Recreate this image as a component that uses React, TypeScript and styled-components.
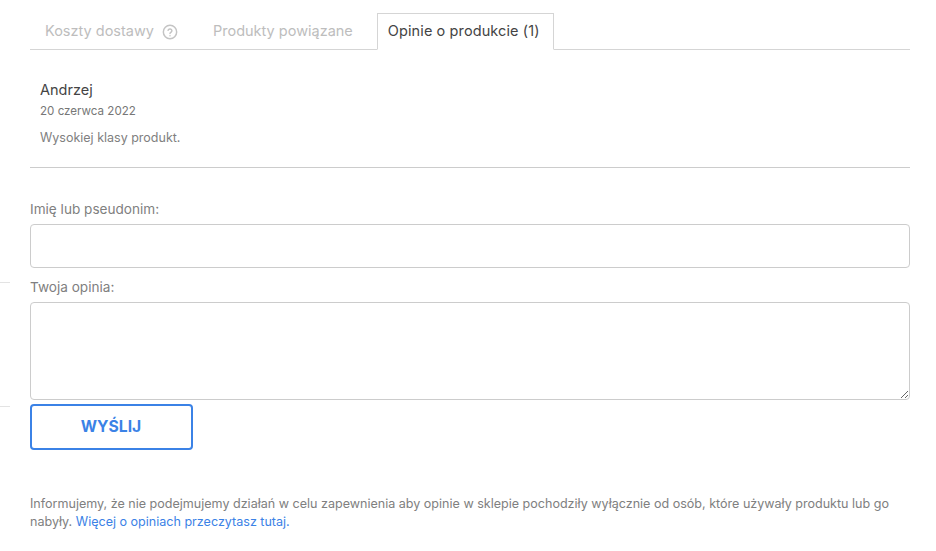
import styled, { createGlobalStyle } from "styled-components";

const GlobalStyle = createGlobalStyle`
  html, body {
    margin: 0;
    padding: 0;
    background: #fff;
  }
  body {
    font-family: "Inter", "Liberation Sans", sans-serif;
    color: #666;
  }
`;

const Page = styled.div`
  position: relative;
  width: 936px;
  height: 551px;
  overflow: hidden;
  padding: 13px 26px 0 30px;
  box-sizing: border-box;
`;

const SideLine = styled.div<{ $top: number }>`
  position: absolute;
  left: 0;
  top: ${(p) => p.$top}px;
  width: 10px;
  height: 1px;
  background: #e3e3e3;
`;

const TabBar = styled.div`
  display: flex;
  height: 37px;
  box-sizing: border-box;
  border-bottom: 1px solid #d5d5d5;
`;

const Tab = styled.div<{ $active?: boolean }>`
  display: flex;
  align-items: center;
  gap: 8px;
  height: 36px;
  box-sizing: border-box;
  padding-bottom: 1px;
  font-size: 14.5px;
  color: #bdbdbd;
  &:first-child {
    padding-left: 15px;
  }
  &:nth-child(2) {
    margin-left: 35px;
  }
  ${(p) =>
    p.$active &&
    `
    height: 37px;
    margin-left: 24px;
    padding: 0 13px 3px 10px;
    letter-spacing: 0.1px;
    color: #444;
    background: #fff;
    border: 1px solid #d5d5d5;
    border-bottom-color: #fff;
  `}
`;

const HelpIcon = styled.svg`
  width: 16px;
  height: 16px;
  color: #c4c4c4;
  margin-top: 2px;
`;

const Review = styled.div`
  padding: 30px 10px 20px;
  border-bottom: 1px solid #ccc;
  height: 118px;
  box-sizing: border-box;
`;

const Author = styled.div`
  font-size: 14.5px;
  line-height: 20px;
  color: #444;
`;

const ReviewDate = styled.div`
  font-size: 11.6px;
  line-height: 14px;
  margin-top: 4px;
  color: #777;
`;

const ReviewText = styled.div`
  font-size: 12.5px;
  line-height: 16px;
  margin-top: 12px;
  color: #808080;
`;

const Form = styled.form`
  display: flex;
  flex-direction: column;
  padding-top: 33px;
`;

const Label = styled.label`
  font-size: 13.6px;
  line-height: 16px;
  color: #808080;
  margin-bottom: 7px;
`;

const TextInput = styled.input`
  height: 44px;
  box-sizing: border-box;
  border: 1px solid #ccc;
  border-radius: 4px;
  background: #fff;
  margin-bottom: 11px;
  outline: none;
`;

const TextArea = styled.textarea`
  display: block;
  height: 98px;
  box-sizing: border-box;
  border: 1px solid #ccc;
  border-radius: 4px;
  background: #fff;
  outline: none;
  margin-bottom: 4px;
  resize: vertical;
`;

const SubmitButton = styled.button`
  width: 163px;
  height: 46px;
  box-sizing: border-box;
  border: 2px solid #3b82e6;
  border-radius: 4px;
  background: #fff;
  color: #3b82e6;
  font-family: inherit;
  font-size: 15.7px;
  font-weight: 700;
  padding: 0 1px 2px 0;
`;

const Notice = styled.p`
  margin: 45px 0 0;
  font-size: 12.56px;
  line-height: 18px;
  color: #808080;
`;

const NoticeLink = styled.a`
  color: #3b82e6;
  text-decoration: none;
`;

export default function App() {
  return (
    <>
      <GlobalStyle />
      <Page>
        <SideLine $top={282} />
        <SideLine $top={406} />
        <TabBar>
          <Tab>
            Koszty dostawy
            <HelpIcon viewBox="0 0 24 24" fill="none" stroke="currentColor" strokeWidth="2.2" strokeLinecap="round">
              <circle cx="12" cy="12" r="10" />
              <path d="M9.1 9.5a3 3 0 0 1 5.8 .8c0 2-2.9 2.2-2.9 3.9" />
              <path d="M12 17.5h.01" />
            </HelpIcon>
          </Tab>
          <Tab>Produkty powiązane</Tab>
          <Tab $active>Opinie o produkcie (1)</Tab>
        </TabBar>
        <Review>
          <Author>Andrzej</Author>
          <ReviewDate>20 czerwca 2022</ReviewDate>
          <ReviewText>Wysokiej klasy produkt.</ReviewText>
        </Review>
        <Form>
          <Label>Imię lub pseudonim:</Label>
          <TextInput />
          <Label>Twoja opinia:</Label>
          <TextArea />
          <SubmitButton type="button">WYŚLIJ</SubmitButton>
        </Form>
        <Notice>
          Informujemy, że nie podejmujemy działań w celu zapewnienia aby opinie w sklepie pochodziły wyłącznie od osób, które używały produktu lub go
          nabyły. <NoticeLink>Więcej o opiniach przeczytasz tutaj.</NoticeLink>
        </Notice>
      </Page>
    </>
  );
}
